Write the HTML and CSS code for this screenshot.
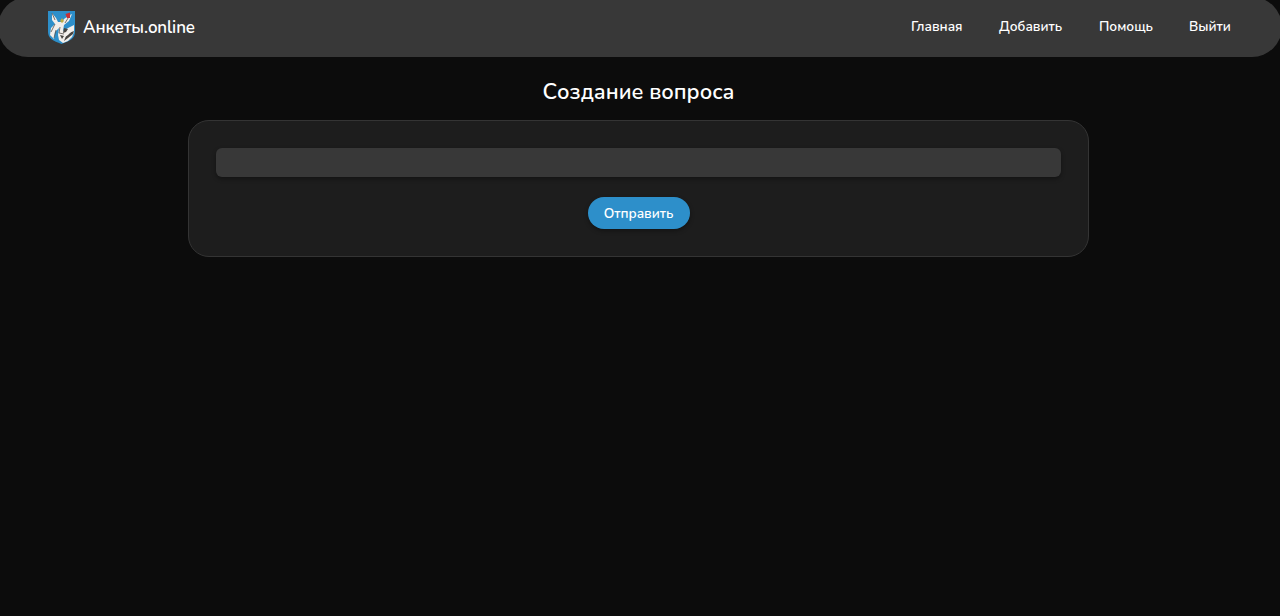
FILE: index.html
```html
<!DOCTYPE html>
<html lang="ru">
<head>
<meta charset="utf-8">
<title>Анкеты.online</title>
<link rel="stylesheet" href="styles.css">
</head>
<body>
<header class="header">
  <a class="brand">
    <svg class="crest" viewBox="0 0 27 33">
      <path d="M0 0H27V21C27 27 22 30 13.500 33C5 30 0 27 0 21Z" fill="#2d8fca"/>
      <path d="M4 2L8 7L10 11L14 11L16 8L22 4L24 3L21 10L16 14L15 20L20 17L26 14V21L24 26L20 30L15 32L11 29L10 24L11 17L7 21L6 28L2 24L3 17L7 13L4 9Z" fill="#f1eeeb"/>
      <path d="M4 2L7 9M7 13L3 21M8 19L6 27M12 16L11 22L16 23M22 4L17 12" fill="none" stroke="#55504c" stroke-width=".8"/>
      <path d="M16 17L20 18L18 21L15 22ZM18 25L21 22L26 20L25 23L20 27L16 30ZM12 24L16 25L14 28Z" fill="#484542"/>
      <path d="M18 22L21 20L24 20L20 24L17 26Z" fill="#f4f1ee"/>
      <path d="M12 10L14 7L16 10L14 12Z" fill="#bcac43"/>
      <path d="M17.500 3L22 1.500V7L19 7Z" fill="#c92f34"/>
    </svg>
    <span class="brand-name">Анкеты.online</span>
  </a>
  <nav class="nav">
    <a class="link home">Главная</a>
    <a class="link add">Добавить</a>
    <a class="link help">Помощь</a>
    <a class="link exit">Выйти</a>
  </nav>
</header>
<main class="main">
  <h1 class="title">Создание вопроса</h1>
  <form class="card">
    <input class="field" type="text" aria-label="Вопрос">
    <button class="submit" type="button">Отправить</button>
  </form>
</main>
</body>
</html>
```
FILE: styles.css
```css
* { box-sizing: border-box; }
body {
  display: flow-root;
  margin: 0;
  min-height: 616px;
  overflow: hidden;
  background: #0c0c0c;
  color: #fff;
  font-family: Nunito, "Open Sans", "Noto Sans", sans-serif;
}
.header {
  display: flex;
  align-items: center;
  justify-content: space-between;
  height: 60px;
  margin: -3px -2px 0;
  padding: 0 50px;
  border-radius: 30px;
  background: #383838;
}
.brand { display: flex; align-items: center; gap: 8px; }
.crest { width: 27px; height: 33px; }
.brand-name { font-size: 17px; font-weight: 600; white-space: nowrap; letter-spacing: -.12px; }
.nav { display: flex; align-items: center; gap: 36px; padding-bottom: 1px; }
.link { font-size: 13.6px; font-weight: 600; white-space: nowrap; }
.home { width: 52px; }
.add { width: 64px; }
.help { width: 54px; }
.exit { width: 43px; }
.main { width: 901px; margin: 0 0 0 188px; }
.title {
  margin: 20px 0 13px;
  font-size: 21.7px;
  font-weight: 600;
  line-height: 30px;
  text-align: center;
}
.card {
  display: flex;
  flex-direction: column;
  align-items: center;
  gap: 20px;
  height: 137px;
  padding: 27px;
  border: 1px solid #343434;
  border-radius: 21px;
  background: #1d1d1d;
}
.field {
  width: 100%;
  height: 29px;
  padding: 4px 10px;
  border: 0;
  border-radius: 6px;
  background: #383838;
  color: #fff;
  font: inherit;
  box-shadow: 0 2px 4px rgba(0, 0, 0, .35);
}
.submit {
  flex: none;
  width: 102px;
  height: 32px;
  padding: 1px 0 0;
  border: 0;
  border-radius: 16px;
  background: #2d8fca;
  color: #fff;
  font: 600 13.6px/1 Nunito, "Open Sans", "Noto Sans", sans-serif;
  box-shadow: 0 2px 4px rgba(0, 0, 0, .35);
}
```
